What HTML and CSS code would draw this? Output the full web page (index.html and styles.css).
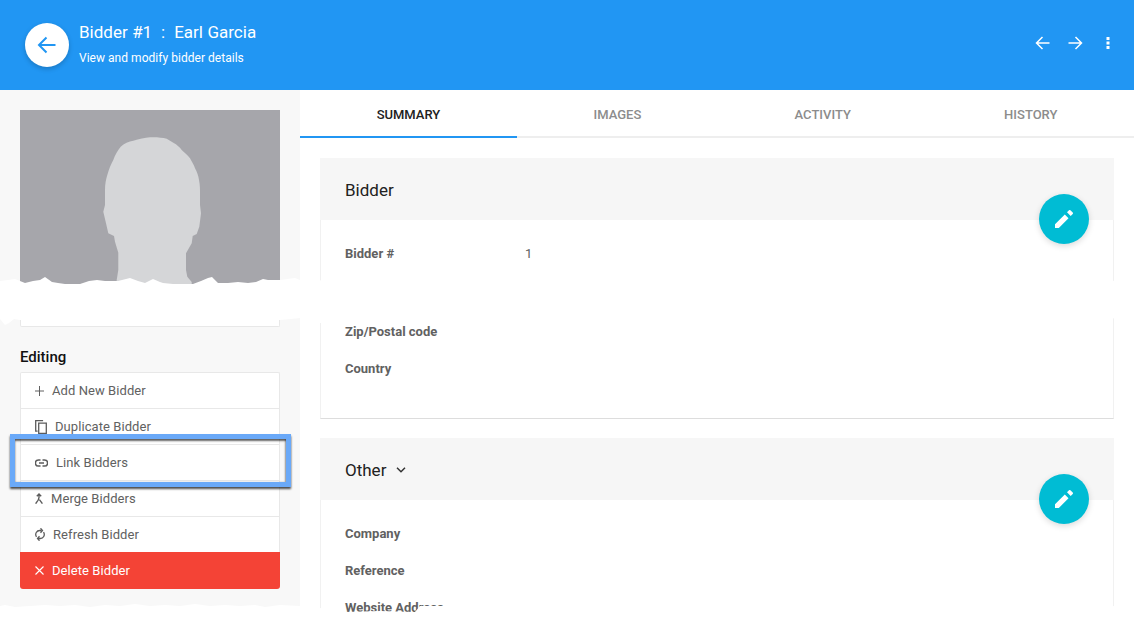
FILE: index.html
```html
<html lang="en">
<head>
<title>Bidder #1</title>
<link rel="stylesheet" href="styles.css">
</head>
<body>
  <header class="topbar">
    <button class="back-btn" type="button">
      <svg width="20" height="18" viewBox="0 0 20 18"><path d="M18.500 9H2M9.500 1.500L2 9l7.500 7.500" fill="none" stroke="#2196f3" stroke-width="2"/></svg>
    </button>
    <div class="topbar-text">
      <div class="topbar-title">Bidder #1 &nbsp;:&nbsp; Earl Garcia</div>
      <div class="topbar-sub">View and modify bidder details</div>
    </div>
    <div class="topbar-actions">
      <svg width="15" height="14" viewBox="0 0 15 14"><path d="M14.500 7H1.500M7.500 1L1.500 7l6 6" fill="none" stroke="#fff" stroke-width="1.500"/></svg>
      <svg width="15" height="14" viewBox="0 0 15 14"><path d="M.5 7h13M7.500 1l6 6-6 6" fill="none" stroke="#fff" stroke-width="1.500"/></svg>
      <svg class="more" width="4" height="14" viewBox="0 0 4 14"><path d="M.5 1h3v3h-3zM.5 5.500h3v3h-3zM.5 10h3v3h-3z" fill="#fff"/></svg>
    </div>
  </header>

  <div class="content">
    <aside class="sidebar">
      <div class="photo-card">
        <svg class="photo" width="260" height="190" viewBox="0 0 260 190">
          <defs><filter id="soft"><feGaussianBlur stdDeviation="0.6"/></filter></defs>
          <rect width="260" height="190" fill="#a6a6ab"/>
          <path filter="url(#soft)" fill="#d5d6d8" d="M130 27.300C136 27 142 27.500 146.700 28.700L153.300 32.700C157 34.500 160 37.500 161.700 40C165 43 168 45.500 170 48.300C172 52 174 55 175 58.300C177 62 178.500 66 179 70C180 75 180 79 180 83.300L180 95 181 103.300 179.300 116.700 176.700 124 172.700 126 171.700 133.300 166 143.300 166 160 167.300 166.700 171.700 172 171.700 190 96 190 96.700 170 98.300 160 98.300 142.700 95 131.700 94 126 88.300 123.300 86 113.300 83.300 101.700 85 95 85 80C85 74 86 69 87.300 65C89 59 91 54 93.300 50C95 45 98 40 100.700 36.700C104 33.500 109 31.500 113.300 30.700C119 29 125 27.800 130 27.300z"/>
        </svg>
        <div class="photo-foot"></div>
      </div>

      <h3 class="side-title">Editing</h3>
      <ul class="action-list">
        <li class="action">
          <svg width="9" height="10" viewBox="0 0 9 10"><path d="M4.500 0v10M0 5h9" stroke="#616161" fill="none"/></svg>
          Add New Bidder
        </li>
        <li class="action">
          <svg width="12" height="14" viewBox="0 0 12 14"><path d="M2.600 11.200H.7V.7h7.400M3.700 3.100h7.600v10.200H3.700z" stroke="#5c5c5c" stroke-width="1.300" fill="none"/></svg>
          Duplicate Bidder
        </li>
        <li class="action">
          <svg width="13" height="8" viewBox="0 0 13 8"><path d="M5.500 .9H3.500a3.100 3.100 0 0 0 0 6.200h2M7.500 .9h2a3.100 3.100 0 0 1 0 6.200h-2M4 4h5" stroke="#5c5c5c" stroke-width="1.500" fill="none"/></svg>
          Link Bidders
        </li>
        <li class="action">
          <svg width="8" height="11" viewBox="0 0 8 11"><path d="M1.800 3.200L4 1l2.200 2.200M4 1.200v3.300C4 7 2.500 8.500 .6 10.600M4.400 6.600L7.400 10.600" stroke="#5c5c5c" stroke-width="1.400" fill="none"/></svg>
          Merge Bidders
        </li>
        <li class="action">
          <svg width="10" height="13" viewBox="0 0 10 13"><path d="M1.500 8.800A4 4 0 0 1 5 2.500h1.500M8.500 4.200A4 4 0 0 1 5 10.500H3.500M5.500 .3l2 2.200-2 2.200M4.500 8.300l-2 2.200 2 2.200" stroke="#5c5c5c" stroke-width="1.300" fill="none"/></svg>
          Refresh Bidder
        </li>
        <li class="action action-danger">
          <svg width="9" height="9" viewBox="0 0 9 9"><path d="M.5 .5l8 8M8.500 .5l-8 8" stroke="#fff" stroke-width="1.100" fill="none"/></svg>
          Delete Bidder
        </li>
      </ul>
    </aside>

    <main class="main">
      <nav class="tabs">
        <a class="tab active">Summary</a>
        <a class="tab">Images</a>
        <a class="tab">Activity</a>
        <a class="tab">History</a>
      </nav>

      <section class="card card-first">
        <div class="card-head">Bidder</div>
        <button class="fab" type="button">
          <svg width="18" height="18" viewBox="0 0 18 18"><path d="M0 14.200V18h3.800L13.500 8.200 9.800 4.500zM17.700 4a1 1 0 0 0 0-1.400L15.400.3a1 1 0 0 0-1.400 0l-2 2 3.700 3.700z" fill="#fff"/></svg>
        </button>
        <div class="card-body">
          <div class="row"><span class="label">Bidder #</span><span class="value">1</span></div>
          <div class="row-gap"></div>
          <div class="row"><span class="label">Zip/Postal code</span></div>
          <div class="row"><span class="label">Country</span></div>
        </div>
      </section>

      <section class="card">
        <div class="card-head">Other
          <svg class="chev" width="10" height="6" viewBox="0 0 10 6"><path d="M1 .8l4 4 4-4" stroke="#333" stroke-width="1.500" fill="none"/></svg>
        </div>
        <button class="fab" type="button">
          <svg width="18" height="18" viewBox="0 0 18 18"><path d="M0 14.200V18h3.800L13.500 8.200 9.800 4.500zM17.700 4a1 1 0 0 0 0-1.400L15.400.3a1 1 0 0 0-1.400 0l-2 2 3.700 3.700z" fill="#fff"/></svg>
        </button>
        <div class="card-body">
          <div class="row"><span class="label">Company</span></div>
          <div class="row"><span class="label">Reference</span></div>
          <div class="row"><span class="label">Website Address</span></div>
        </div>
      </section>
    </main>
  </div>

  <!-- torn paper cuts, they lie over the page -->
  <svg class="tears" width="1134" height="640" viewBox="0 0 1134 640">
    <path fill="#fff" d="M0 281L8 280 15 279 25 283 33 281 40 280 45 277 52 282 58 283 65 284 73 284 80 284 89 281 97 280 105 281 118 281 130 278 138 281 145 283 153 279 160 282 163 283 173 284 183 284 193 284 201 281 208 278 212 277 218 283 228 283 238 282 248 283 256 282 263 279 268 280 280 280 295 278 300 280 420 282 620 280 820 281 1020 280 1134 281 1134 318 1020 320 820 319 620 321 420 320 340 322 320 323 300 318 291 319 280 320 20 320 14 319 9 323 5 325 0 319z"/>
    <path fill="#fff" d="M0 606L5 605 15 607 30 606 45 605 60 606 75 605 90 607 105 605 120 606 135 604 150 606 165 605 180 606 195 604 210 606 225 605 240 606 255 605 265 607 280 605 300 606 320 608 345 612 380 611 415 612 420 606 445 606 500 608 700 606 900 607 1134 606 1134 640 0 640z"/>
  </svg>

  <!-- callout around the Link Bidders row -->
  <div class="callout"></div>
</body>
</html>
```

FILE: styles.css
```css
* {
  box-sizing: border-box;
}

html,
body {
  margin: 0;
  height: 640px;
  overflow: hidden;
}

body {
  position: relative;
  background: #fff;
  font-family: Roboto, "Liberation Sans", sans-serif;
  color: #616161;
}

svg {
  display: block;
  flex: none;
}

/* top bar */
.topbar {
  display: flex;
  align-items: center;
  height: 90px;
  padding: 0 24px 0 25px;
  background: #2196f3;
  color: #fff;
}

.back-btn {
  display: flex;
  align-items: center;
  justify-content: center;
  width: 44px;
  height: 44px;
  padding: 0;
  border: none;
  border-radius: 50%;
  background: #fff;
  box-shadow: 0 2px 5px rgba(0, 0, 0, .2);
}

.topbar-text {
  margin-left: 10px;
  margin-top: -3px;
}

.topbar-title {
  font-size: 17px;
  line-height: 22px;
  word-spacing: .25px;
}

.topbar-sub {
  margin-top: 7px;
  font-size: 12px;
  line-height: 16px;
  letter-spacing: .03px;
}

.topbar-actions {
  display: flex;
  align-items: center;
  gap: 18px;
  margin-left: auto;
  margin-top: -5px;
}

.more {
  margin-left: 5px;
}

.content {
  display: flex;
  height: 550px;
}

/* sidebar */
.sidebar {
  flex: none;
  width: 300px;
  padding: 20px;
  background: #f8f8f8;
}

.photo-foot {
  height: 27px;
  background: #fff;
  border: 1px solid #e8e8e8;
  border-top: none;
  border-radius: 0 0 2px 2px;
}

.side-title {
  margin: 21px 0 6px;
  font-size: 15px;
  line-height: 18px;
  font-weight: 500;
  color: #111;
}

.action-list {
  margin: 0;
  padding: 0;
  list-style: none;
}

.action {
  display: flex;
  align-items: center;
  gap: 8px;
  height: 36px;
  padding-left: 14px;
  font-size: 13px;
  letter-spacing: .07px;
  background: #fff;
  border: 1px solid #e8e8e8;
  border-bottom: none;
}

.action:first-child {
  border-radius: 2px 2px 0 0;
}

.action-danger {
  height: 37px;
  padding-left: 15px;
  border: none;
  border-radius: 0 0 3px 3px;
  background: #f44336;
  color: #fff;
}

/* main area */
.main {
  flex: 1;
  min-width: 0;
  padding: 0 20px;
}

.tabs {
  display: flex;
  height: 48px;
  margin: 0 -20px 20px;
  border-bottom: 2px solid #eee;
}

.tab {
  flex: 1 1 auto;
  height: 48px;
  line-height: 49px;
  text-align: center;
  font-size: 13px;
  font-weight: 500;
  text-transform: uppercase;
  color: #8c8c8c;
}

.tab.active {
  color: #212121;
  border-bottom: 2px solid #2196f3;
}

.card {
  position: relative;
  border: 1px solid #f1f1f1;
  border-top: none;
  margin-bottom: 19px;
}

.card-first {
  border-bottom: 1px solid #ddd;
}

.card-head {
  display: flex;
  align-items: center;
  gap: 10px;
  height: 62px;
  margin: 0 -1px;
  padding: 2px 0 0 25px;
  font-size: 17px;
  color: #212121;
  background: #f6f6f6;
}

.card-body {
  padding: 15px 0 31px 24px;
}

.row {
  display: flex;
  align-items: center;
  height: 37px;
  font-size: 13px;
}

.row-gap {
  height: 41px;
}

.label {
  width: 180px;
  font-weight: 700;
  color: #616161;
}

.fab {
  position: absolute;
  top: 36px;
  right: 24px;
  display: flex;
  align-items: center;
  justify-content: center;
  width: 50px;
  height: 50px;
  padding: 0;
  border: none;
  border-radius: 50%;
  background: #00bcd4;
  box-shadow: 0 2px 6px rgba(0, 0, 0, .15);
}

/* overlays */
.tears {
  position: absolute;
  top: 0;
  left: 0;
  pointer-events: none;
}

.callout {
  position: absolute;
  top: 434px;
  left: 10px;
  width: 281px;
  height: 53px;
  border: 5px solid #6aa9f8;
  box-shadow: 0 2px 2px rgba(0, 0, 0, .7), inset 0 2px 2px rgba(0, 0, 0, .6), inset -1px 0 2px rgba(0, 0, 0, .25);
}
```
